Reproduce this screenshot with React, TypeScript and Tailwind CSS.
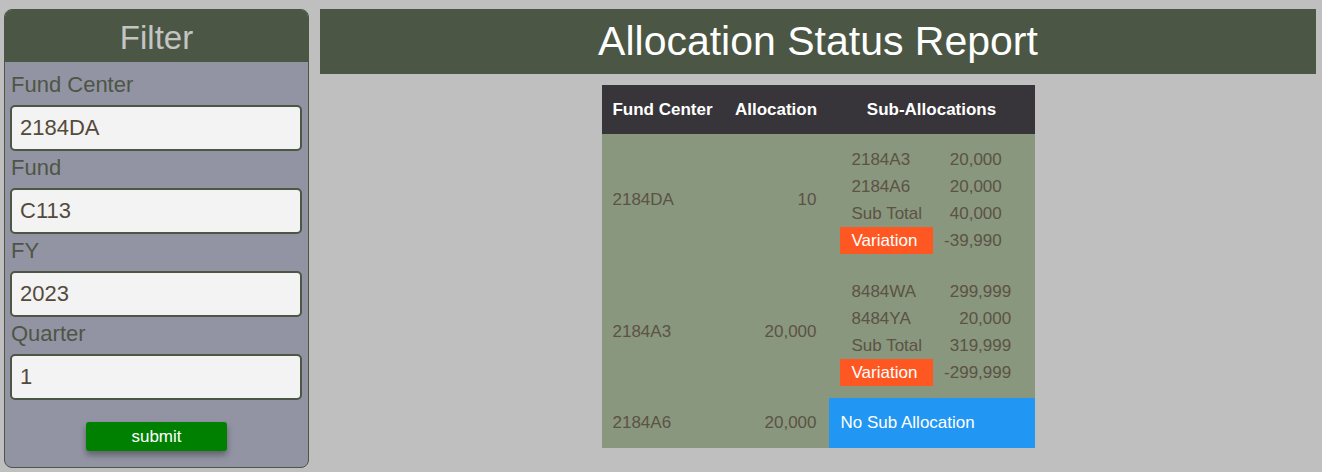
import React from "react";

const fields = [
  { label: "Fund Center", value: "2184DA" },
  { label: "Fund", value: "C113" },
  { label: "FY", value: "2023" },
  { label: "Quarter", value: "1" },
];

type Sub = { name: string; value: string };
type Row = { fc: string; alloc: string; subs: Sub[] | null; subTotal?: string; variation?: string };

const rows: Row[] = [
  {
    fc: "2184DA",
    alloc: "10",
    subs: [
      { name: "2184A3", value: "20,000" },
      { name: "2184A6", value: "20,000" },
    ],
    subTotal: "40,000",
    variation: "-39,990",
  },
  {
    fc: "2184A3",
    alloc: "20,000",
    subs: [
      { name: "8484WA", value: "299,999" },
      { name: "8484YA", value: "20,000" },
    ],
    subTotal: "319,999",
    variation: "-299,999",
  },
  { fc: "2184A6", alloc: "20,000", subs: null },
];

export default function App() {
  return (
    <div
      className="min-h-[472px] w-[1322px] bg-[#bfbfbf] flex items-start pl-[4px] pt-[9px] pr-[6px] gap-[11px]"
      style={{ fontFamily: '"Liberation Sans", Arial, sans-serif' }}
    >
      <aside className="w-[305px] h-[459px] shrink-0 border border-[#4b5644] rounded-[8px] bg-[#9294a3] overflow-hidden flex flex-col">
        <div className="h-[52px] bg-[#4b5644] flex items-center justify-center text-[33px] text-[#c4c4c4] leading-none pt-[2px]">
          Filter
        </div>
        <div className="px-[5px] pt-[6px] flex flex-col">
          {fields.map((f) => (
            <div key={f.label} className="flex flex-col">
              <label className="h-[33px] leading-[33px] text-[22px] text-[#4f5545] pl-[1px]">{f.label}</label>
              <input
                defaultValue={f.value}
                className="mt-[4px] w-[292px] h-[46px] border-2 border-[#4b5644] rounded-[5px] bg-[#f3f3f3] px-[8px] text-[22px] text-[#544a3c] outline-none"
                style={{ fontFamily: '"Liberation Sans", Arial, sans-serif' }}
              />
            </div>
          ))}
          <button
            className="mt-[22px] mx-auto w-[141px] h-[29px] bg-[#008000] text-white text-[17px] rounded-[3px] shadow-[0_4px_6px_rgba(0,0,0,0.35)] leading-none"
            style={{ fontFamily: '"Liberation Sans", Arial, sans-serif' }}
          >
            submit
          </button>
        </div>
      </aside>

      <main className="flex-1 flex flex-col items-center">
        <div className="w-full h-[65px] bg-[#4b5644] flex items-center justify-center text-[41px] text-white leading-none">
          Allocation Status Report
        </div>
        <table className="mt-[11px] w-[433px] border-collapse text-[17px] text-[#5c5245]">
          <thead>
            <tr className="bg-[#373539] text-white font-bold h-[49px]">
              <th className="w-[122px] text-center font-bold p-0">Fund Center</th>
              <th className="w-[105px] text-center font-bold p-0">Allocation</th>
              <th className="w-[206px] text-center font-bold p-0">Sub-Allocations</th>
            </tr>
          </thead>
          <tbody className="bg-[#88977d]">
            {rows.map((r) => (
              <tr key={r.fc} className={r.subs ? "h-[132px]" : "h-[50px]"}>
                <td className="pl-[11px] text-left align-middle p-0">{r.fc}</td>
                <td className="pr-[12px] text-right align-middle p-0">{r.alloc}</td>
                {r.subs ? (
                  <td className="pl-[11px] py-[12px] align-middle">
                    <table className="border-collapse">
                      <tbody>
                        {r.subs.map((s) => (
                          <tr key={s.name} className="h-[27px]">
                            <td className="pl-[12px] pr-[11px] text-left">{s.name}</td>
                            <td className="px-[11px] text-right">{s.value}</td>
                          </tr>
                        ))}
                        <tr className="h-[27px]">
                          <td className="pl-[12px] pr-[11px] text-left whitespace-nowrap">Sub Total</td>
                          <td className="px-[11px] text-right">{r.subTotal}</td>
                        </tr>
                        <tr className="h-[27px]">
                          <td className="pl-[12px] pr-[11px] text-left bg-[#ff5722] text-white">Variation</td>
                          <td className="px-[11px] text-right">{r.variation}</td>
                        </tr>
                      </tbody>
                    </table>
                  </td>
                ) : (
                  <td className="bg-[#2196f3] text-white pl-[12px] align-middle">No Sub Allocation</td>
                )}
              </tr>
            ))}
          </tbody>
        </table>
      </main>
    </div>
  );
}
